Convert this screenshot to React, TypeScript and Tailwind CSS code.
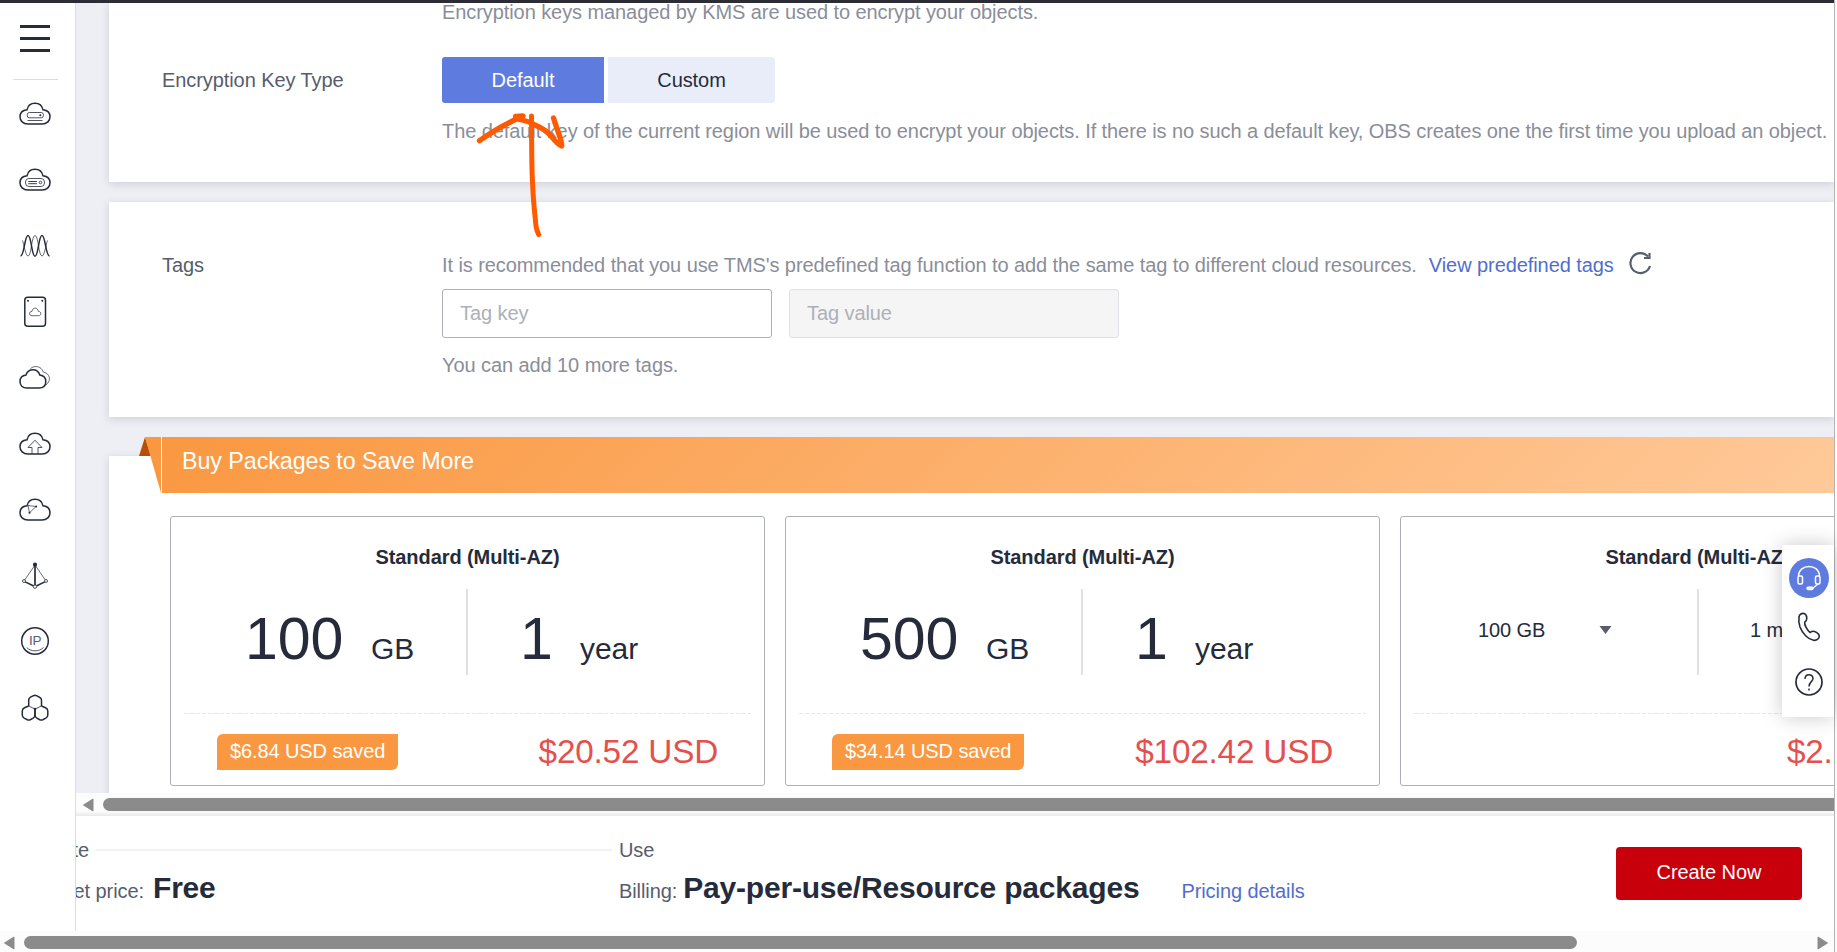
import React from "react";

const CLOUD =
  "M9 26 C4 26 1 22.800 1 18.700 C1 14.700 3.800 12.300 8 11.800 C8.800 8 11.800 5.300 16 5.300 C20.200 5.300 23.200 8 24 11.800 C28.200 12.300 31 14.700 31 18.700 C31 22.800 28 26 23 26 Z";

function Icon({ children }: { children: React.ReactNode }) {
  return (
    <svg width="32" height="32" viewBox="0 0 32 32" fill="none" stroke="#252b3a" strokeWidth="1.500" className="shrink-0">
      {children}
    </svg>
  );
}

const icons: React.ReactNode[] = [
  <>
    <path d={CLOUD} />
    <rect x="8.300" y="14.500" width="16" height="5.300" rx="2" strokeWidth="0.8" />
    <circle cx="21.300" cy="17.200" r="1" fill="#252b3a" stroke="none" />
    <path d="M8.500 22.500 H23.500" strokeWidth="0.8" />
  </>,
  <>
    <path d={CLOUD} />
    <rect x="6.500" y="14.500" width="19" height="8" rx="3.500" strokeWidth="0.8" />
    <path d="M9.300 17.500 H18 M9.300 19.700 H18" strokeWidth="0.9" />
    <circle cx="21.500" cy="18.500" r="1.300" strokeWidth="0.8" />
  </>,
  <>
    <path d="M1.500 26 C5.500 26 5.500 5.500 9 5.500 C12.500 5.500 12.500 26.300 16 26.300 C19.500 26.300 19.500 5.500 23 5.500 C26.500 5.500 26.500 26 30.500 26" />
    <path d="M3.500 10.500 C5 14 6.500 26 9 26 C12.500 26 12.500 5.500 16 5.500 C19.500 5.500 19.500 26 23 26 C25.500 26 27 14 28.500 10.500" strokeWidth="0.7" />
  </>,
  <>
    <rect x="5.800" y="1.200" width="20.700" height="29" rx="3" />
    <circle cx="9" cy="4.800" r="1" fill="#252b3a" stroke="none" />
    <circle cx="23.300" cy="4.800" r="1" fill="#252b3a" stroke="none" />
    <path d="M13 19.700 C9.700 19.700 9.700 15.500 13 15.300 C13.800 11 18.500 11 19.300 15.300 C22.700 15.500 22.700 19.700 19.300 19.700 Z" strokeWidth="0.7" />
  </>,
  <>
    <path d="M8 26 C3.500 26 1 23.200 1 19.500 C1 16 3.500 13.500 7 13 C8 9.800 10.500 7.800 14 7.800 C17.500 7.800 19.800 9.800 20.800 13 C24.500 13.500 26.800 16 26.800 19.500 C26.800 23.200 24.500 26 20 26 Z" />
    <path d="M11.500 6.500 C15.500 3.200 22.500 4 24.300 10 C31 11.500 32.800 18.500 27 22.800" strokeWidth="0.7" />
  </>,
  <>
    <path d={CLOUD} />
    <path d="M13 26 V19.500 H9 L16 12.200 L23 19.500 H19 V26" strokeWidth="0.8" />
  </>,
  <>
    <path d={CLOUD} />
    <path d="M9 11.500 L17 12.500 L10.500 18.800 Z" strokeWidth="0.7" />
    <circle cx="17.200" cy="12.600" r="1" fill="#252b3a" stroke="none" />
    <circle cx="10.500" cy="18.800" r="1" fill="#252b3a" stroke="none" />
  </>,
  <>
    <path d="M16 5 L5 21 M16 5 L27 21" strokeWidth="0.7" />
    <path d="M16 5 V26" strokeWidth="1.700" />
    <path d="M6.200 21.800 L14.700 26 M17.300 26 L25.800 21.800" />
    <circle cx="16" cy="4.700" r="2.100" fill="#252b3a" stroke="none" />
    <circle cx="5" cy="21" r="1.500" fill="#fff" strokeWidth="0.8" />
    <circle cx="27" cy="21" r="1.500" fill="#fff" strokeWidth="0.8" />
    <circle cx="16" cy="26.600" r="1.700" fill="#fff" strokeWidth="0.8" />
  </>,
  <>
    <circle cx="16" cy="15" r="13.300" />
    <text x="16.200" y="19.300" textAnchor="middle" fontSize="13.500" fill="#575d6c" stroke="none" fontFamily="Liberation Sans, sans-serif">
      IP
    </text>
    <path d="M7.700 21.500 C12 26 20 26 24.500 21.500" strokeWidth="0.8" />
  </>,
  <>
    <path d="M9.700 14 V8 C9.700 6.500 10.500 5.800 11.500 5.200 L14.500 3.700 Q16 3 17.500 3.700 L20.500 5.200 C21.800 5.800 22.500 6.500 22.500 8 V14" />
    <path d="M9.700 14 L5.500 15.800 C4 16.500 3.300 17.300 3.300 19 V23 C3.300 24.500 4 25.500 5.200 26.200 L8.300 27.700 Q9.700 28.300 11.200 27.700 L14.200 26.200 C15.500 25.500 16 24.500 16 23 V17" />
    <path d="M22.500 14 L26.500 15.800 C28 16.500 28.800 17.300 28.800 19 V23 C28.800 24.500 28 25.500 26.800 26.200 L23.800 27.700 Q22.300 28.300 20.800 27.700 L17.800 26.200 C16.500 25.500 16 24.500 16 23 V17" />
    <path d="M9.700 14 L16 17 L22.500 14" strokeWidth="0.8" />
    <circle cx="16" cy="17" r="1.300" fill="#252b3a" stroke="none" />
  </>,
];

function Sidebar() {
  return (
    <aside className="flex w-[76px] shrink-0 flex-col items-center border-r border-[#dcdde2] bg-white pr-[5px]">
      <div className="mt-[22px] flex h-[27px] w-[30px] flex-col justify-between">
        <div className="h-[3px] bg-[#252b3a]" />
        <div className="h-[3px] bg-[#252b3a]" />
        <div className="h-[3px] bg-[#252b3a]" />
      </div>
      <div className="mt-[27px] h-px w-[45px] shrink-0 bg-[#dcdde2]" />
      <nav className="mt-[18px] flex flex-col gap-[34px]">
        {icons.map((icon, i) => (
          <Icon key={i}>{icon}</Icon>
        ))}
      </nav>
    </aside>
  );
}

function CardTop({ children }: { children: React.ReactNode }) {
  return (
    <>
      <h3 className="mt-[25px] text-center text-[20px] leading-[30px] font-bold">Standard (Multi-AZ)</h3>
      {children}
      <div className="mx-[13px] mt-[38px] h-px bg-[repeating-linear-gradient(90deg,#e6e6f2_0_4px,transparent_4px_6px)]" />
    </>
  );
}

function PriceRow({ saved, price }: { saved?: string; price: string }) {
  return (
    <div className="mt-[20px] flex items-center justify-between px-[46px]">
      {saved ? (
        <span className="h-9 rounded-tl-[6px] rounded-br-[6px] bg-[#fa9841] px-[13px] leading-[34px] tracking-[-0.1px] text-white">{saved}</span>
      ) : (
        <span />
      )}
      <span className="text-[33.300px] leading-9 tracking-[-0.2px] text-[#e3504d]">{price}</span>
    </div>
  );
}

function PackageCard({ size, saved, price }: { size: string; saved: string; price: string }) {
  return (
    <section className="h-[270px] w-[595px] shrink-0 rounded-[3px] border border-[#adb0b8]">
      <CardTop>
        <div className="mt-[17px] flex h-[86px]">
          <div className="flex w-[295px] shrink-0 items-baseline pl-[74px] leading-[100px]">
            <span className="w-[126px] text-[59px]">{size}</span>
            <span className="text-[30px]">GB</span>
          </div>
          <div className="w-[2px] bg-[#dfe1e6]" />
          <div className="flex items-baseline pl-[52px] leading-[100px]">
            <span className="w-[60px] text-[59px]">1</span>
            <span className="text-[30px]">year</span>
          </div>
        </div>
      </CardTop>
      <PriceRow saved={saved} price={price} />
    </section>
  );
}

function SelectCard() {
  return (
    <section className="h-[270px] w-[595px] shrink-0 rounded-[3px] border border-[#adb0b8]">
      <CardTop>
        <div className="mt-[17px] flex h-[86px]">
          <div className="flex w-[296px] items-start justify-between pt-[26px] pr-[85px] pl-[77px] leading-[30px]">
            <span>100 GB</span>
            <svg width="13" height="8" viewBox="0 0 13 8" className="mt-[11px]">
              <path d="M0.500 0 H12.500 L6.500 8 Z" fill="#575d6c" />
            </svg>
          </div>
          <div className="w-[2px] bg-[#dfe1e6]" />
          <div className="pt-[26px] pl-[51px] leading-[30px]">1 month</div>
        </div>
      </CardTop>
      <PriceRow price="$2.28 USD" />
    </section>
  );
}

function Contact() {
  return (
    <div className="absolute top-[545px] right-[3px] flex h-[172px] w-[52px] flex-col items-center bg-white pt-[13px] pl-px shadow-[0_0_20px_rgba(0,0,0,0.22)]">
      <div className="flex size-[40px] shrink-0 items-center justify-center rounded-full bg-[#5e7ce0]">
        <svg width="26" height="26" viewBox="0 0 26 26" fill="none" stroke="#fff" strokeWidth="1.500">
          <path d="M2.500 11.500 C2.500 -2 23.500 -2 23.500 11.500" />
          <rect x="2" y="11" width="4.500" height="8" rx="1.500" />
          <rect x="19.500" y="11" width="4.500" height="8" rx="1.500" />
          <path d="M22 19 L17 23" />
          <ellipse cx="14" cy="23.300" rx="3" ry="1.300" fill="#dfe5f9" />
        </svg>
      </div>
      <svg width="24" height="30" viewBox="0 0 24 30" fill="none" stroke="#252b3a" strokeWidth="1.600" strokeLinejoin="round" className="mt-[14px] shrink-0">
        <path d="M2 5 C2.300 2 5 1 7 1.500 C9.200 2.200 9.800 4.200 9.800 6.200 C9.800 8.200 9.200 9.200 7.700 10.200 C7.300 13 10 18 13 20.500 C14.500 19.500 16 19 17.500 19.500 C19.500 20.200 22 22 22.300 24 C22.300 27 19.500 28.800 16.500 28.300 C11 27.500 5.500 21.500 3 15 C1.800 11 1.500 8 2 5 Z" />
      </svg>
      <svg width="30" height="30" viewBox="0 0 30 30" fill="none" stroke="#252b3a" strokeWidth="1.500" className="mt-[25px] shrink-0">
        <circle cx="15" cy="15" r="13" strokeWidth="1.700" />
        <path d="M11 12 C11 6.300 19 6.300 19 11.500 C19 14.500 15 15 15 19.500" />
        <path d="M15 21.500 V23.500" />
      </svg>
    </div>
  );
}

export default function App() {
  return (
    <div className="relative flex h-[952px] w-[1837px] overflow-hidden bg-[#fafafa] font-['Liberation_Sans',Arial,sans-serif] text-[20px] tracking-[-0.08px] whitespace-nowrap text-[#252b3a]">
      <div className="flex w-[1835px] shrink-0 flex-col border-r border-[#b4b4b4]">
        <div className="h-[3px] shrink-0 bg-[#2b2c34]" />
        <div className="flex h-[928px] shrink-0">
          <Sidebar />
          <div className="flex min-w-0 flex-1 flex-col">
            <main className="h-[790px] shrink-0 overflow-hidden bg-[#eeeff5] pl-[33px]">
              <section className="flex h-[179px] bg-white pl-[53px] shadow-[0_2px_8px_rgba(40,45,60,0.16)]">
                <div className="w-[280px] shrink-0 pt-[62px] leading-[30px] text-[#575d6c]">Encryption Key Type</div>
                <div className="text-[#8a8e99]">
                  <p className="-mt-[6px] leading-[30px]">Encryption keys managed by KMS are used to encrypt your objects.</p>
                  <div className="mt-[30px] flex h-[46px] gap-1 leading-[46px]">
                    <button className="w-[162px] rounded-l-[3px] bg-[#5e7ce0] text-center text-white">Default</button>
                    <button className="w-[167px] rounded-r-[3px] bg-[#e9edfa] text-center text-[#252b3a]">Custom</button>
                  </div>
                  <p className="mt-[13px] leading-[30px]">
                    The default key of the current region will be used to encrypt your objects. If there is no such a default key, OBS creates one the first time you upload an object.
                  </p>
                </div>
              </section>

              <section className="mt-5 flex h-[215px] bg-white pl-[53px] shadow-[0_2px_8px_rgba(40,45,60,0.16)]">
                <div className="w-[280px] shrink-0 pt-[48px] leading-[30px] text-[#575d6c]">Tags</div>
                <div className="text-[#8a8e99]">
                  <div className="mt-[48px] flex h-[39px] leading-[30px]">
                    <span>It is recommended that you use TMS's predefined tag function to add the same tag to different cloud resources.</span>
                    <a className="ml-[12px] text-[#526ecc]">View predefined tags</a>
                    <svg width="24" height="24" viewBox="0 0 24 24" fill="none" stroke="#575d6c" strokeWidth="2.200" className="mt-[1px] ml-[14px]">
                      <path d="M22 15 A10 10 0 1 1 20 5.500" />
                      <path d="M21.500 2 V7 H16" />
                    </svg>
                  </div>
                  <div className="flex h-[49px] gap-[17px] leading-[46px] text-[#adb0b8]">
                    <div className="w-[330px] rounded-[3px] border border-[#adb0b8] pl-[17px]">Tag key</div>
                    <div className="w-[330px] rounded-[3px] border border-[#dfe1e6] bg-[#f5f5f6] pl-[17px]">Tag value</div>
                  </div>
                  <p className="mt-[12px] leading-[30px]">You can add 10 more tags.</p>
                </div>
              </section>

              <div className="relative mt-[39px] h-[340px] bg-white shadow-[0_2px_8px_rgba(40,45,60,0.16)]">
                <div className="relative -top-[19px] ml-[30px] flex h-[56px]">
                  <svg width="23" height="56" viewBox="0 0 23 56" className="shrink-0">
                    <path d="M6 0 L0 19 H12 Z" fill="#b8500a" />
                    <path d="M6 0 H22 V56 Z" fill="#fa9841" />
                    <path d="M22.500 0 V56" stroke="#fff" />
                  </svg>
                  <h2 className="flex-1 bg-[linear-gradient(135deg,#fa9841,#ffc999)] pl-[20px] text-[23.300px] leading-[49px] text-white">
                    Buy Packages to Save More
                  </h2>
                </div>
                <div className="mt-1 ml-[61px] flex gap-5">
                  <PackageCard size="100" saved="$6.84 USD saved" price="$20.52 USD" />
                  <PackageCard size="500" saved="$34.14 USD saved" price="$102.42 USD" />
                  <SelectCard />
                </div>
              </div>
            </main>

            <div className="flex h-[23px] shrink-0 items-start overflow-hidden bg-[linear-gradient(#fcfcfc_18px,#e9e9e9)] pt-[5px]">
              <svg width="12" height="14" viewBox="0 0 12 14" className="ml-[6px]">
                <path d="M11 1 V13 L1.500 7 Z" fill="#8b8b8b" stroke="#8b8b8b" strokeLinejoin="round" />
              </svg>
              <div className="ml-[9px] h-[13px] flex-1 rounded-l-full bg-[#8b8b8b]" />
            </div>

            <footer className="flex min-h-0 flex-1 overflow-hidden bg-white text-[#575d6c]">
              <div className="-ml-[46px] w-[589px] shrink-0">
                <div className="mt-[19px] flex items-center leading-[30px]">
                  <span className="flex w-[59px] justify-end">Create</span>
                  <div className="ml-[7px] h-[2px] w-[516px] bg-[#f3f3f5]" />
                </div>
                <div className="mt-[4px] flex items-baseline leading-[38px]">
                  <span className="flex w-[114px] justify-end">Bucket price:</span>
                  <b className="ml-[9px] text-[30px] tracking-[-0.2px] text-[#252b3a]">Free</b>
                </div>
              </div>
              <div className="flex-1">
                <div className="mt-[19px] leading-[30px]">Use</div>
                <div className="mt-[4px] flex items-baseline leading-[38px]">
                  <span>Billing:</span>
                  <b className="ml-[6px] text-[30px] tracking-[-0.2px] text-[#252b3a]">Pay-per-use/Resource packages</b>
                  <a className="ml-[42px] text-[#526ecc]">Pricing details</a>
                </div>
              </div>
              <button className="mt-[31px] mr-[32px] h-[53px] w-[186px] rounded-[4px] bg-[#c7000b] pb-[3px] text-center text-white">Create Now</button>
            </footer>
          </div>
        </div>

        <div className="flex h-[21px] items-start bg-[#fcfcfc] pt-[5px]">
          <svg width="12" height="14" viewBox="0 0 12 14" className="ml-[3px]">
            <path d="M11 1 V13 L1.500 7 Z" fill="#8b8b8b" stroke="#8b8b8b" strokeLinejoin="round" />
          </svg>
          <div className="ml-[9px] h-[13px] w-[1553px] rounded-full bg-[#8b8b8b]" />
          <svg width="12" height="14" viewBox="0 0 12 14" className="mr-[5px] ml-auto">
            <path d="M1 1 V13 L10.500 7 Z" fill="#8b8b8b" stroke="#8b8b8b" strokeLinejoin="round" />
          </svg>
        </div>
      </div>

      <Contact />

      <svg width="100" height="130" viewBox="470 110 100 130" fill="none" stroke="#ff5a00" strokeWidth="5" strokeLinecap="round" strokeLinejoin="round" className="pointer-events-none absolute top-[110px] left-[470px]">
        <path d="M479.500 140.700 C490 133 505 124 523 116 L515.500 116.500 L517 119 C523 120 530 122 535 125 C542 128 547 131 551 136 C555 141 558 145 561.700 146 C563 143 557 130 553.500 118" strokeWidth="5.300" />
        <path d="M531.500 116 C531.700 140 531.500 165 532.500 182 C533 197 534.500 212 536 226 C536.500 230 537.500 232 538.700 234.500" />
      </svg>
    </div>
  );
}
